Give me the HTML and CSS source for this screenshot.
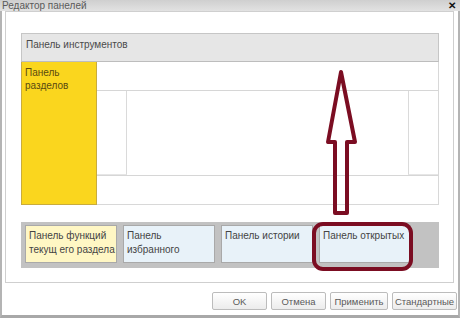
FILE: index.html
```html
<!DOCTYPE html>
<html lang="ru">
<head>
<meta charset="UTF-8" />
<title>Редактор панелей</title>
<link rel="stylesheet" href="styles.css">
</head>
<body>

<div class="window">
  <div class="titlebar">
    <span class="title">Редактор панелей</span>
    <span class="close">✕</span>
  </div>

  <div class="editor">
    <div class="panel toolbar">Панель инструментов</div>

    <div class="middle">
      <div class="panel sections">Панель<br>разделов</div>
      <div class="work">
        <div class="strip"></div>
        <div class="work-row">
          <div class="side"></div>
          <div class="center"></div>
          <div class="side right"></div>
        </div>
        <div class="strip bottom"></div>
      </div>
    </div>

    <div class="bottom-bar">
      <div class="item yellow">Панель функций<br>текущ его раздела</div>
      <div class="item">Панель<br>избранного</div>
      <div class="item">Панель истории</div>
      <div class="item">Панель открытых</div>
    </div>
  </div>

  <div class="buttons">
    <button class="btn ok">OK</button>
    <button class="btn cancel">Отмена</button>
    <button class="btn apply">Применить</button>
    <button class="btn std">Стандартные</button>
  </div>

  <!-- red marks drawn over the dialog -->
  <svg class="marks" width="460" height="318" viewBox="0 0 460 318">
    <path d="M341 72 L328 142 L335 142 L335 213 L347 213 L347 142 L355 142 Z"
          fill="none" stroke="#7b0d22" stroke-width="4" stroke-linejoin="round" />
    <rect x="314" y="224" width="97" height="45" rx="9" ry="9"
          fill="none" stroke="#7b0d22" stroke-width="4" />
  </svg>
</div>

</body>
</html>
```

FILE: styles.css
```css
body {
  margin: 0;
  font-family: "Liberation Sans", Arial, sans-serif;
  background: #fff;
}
.window {
  position: relative;
  width: 460px;
  height: 318px;
  box-sizing: border-box;
  background: #fff;
  border-left: 2px solid #b4b4b4;
  border-right: 2px solid #b4b4b4;
  border-bottom: 3px solid #a8a8a8;
  display: flex;
  flex-direction: column;
}
.titlebar {
  height: 11px;
  margin: 0 -2px;
  padding: 0 4px 0 2px;
  background: linear-gradient(to bottom, #cfcfcf, #e2e2e2);
  display: flex;
  align-items: center;
  justify-content: space-between;
}
.title {
  font-size: 10px;
  color: #5a5a5a;
  line-height: 10px;
}
.close {
  font-size: 10px;
  font-weight: bold;
  color: #111;
  line-height: 10px;
}
.editor {
  margin: 0 4px 0 3px;
  height: 272px;
  box-sizing: border-box;
  border: 1px solid #cfcfcf;
  padding: 21px 14px 0 15px;
  display: flex;
  flex-direction: column;
}
.panel {
  font-size: 10px;
  color: #4a4a4a;
  box-sizing: border-box;
}
.toolbar {
  height: 29px;
  background: #e6e6e6;
  border: 1px solid #c6c6c6;
  border-bottom-color: #bdbdbd;
  padding: 5px 4px;
}
.middle {
  height: 143px;
  display: flex;
}
.sections {
  width: 76px;
  background: #fad61e;
  border: 1px solid #c9ac3c;
  border-top: none;
  padding: 4px 3px;
  line-height: 13px;
  color: #5a4a10;
}
.work {
  flex: 1;
  display: flex;
  flex-direction: column;
  border-right: 1px solid #d8d8d8;
  border-bottom: 1px solid #d8d8d8;
}
.strip {
  height: 29px;
  border-bottom: 1px solid #d6d6d6;
  box-sizing: border-box;
}
.strip.bottom {
  height: 28px;
  border-bottom: none;
}
.work-row {
  flex: 1;
  display: flex;
  border-bottom: 1px solid #d6d6d6;
}
.side {
  width: 29px;
  border-right: 1px solid #dadada;
  border-bottom: 1px solid #e6e6e6;
}
.side.right {
  border-right: none;
  border-left: 1px solid #dadada;
}
.center {
  flex: 1;
}
.bottom-bar {
  margin-top: 17px;
  height: 46px;
  box-sizing: border-box;
  background: #c2c2c2;
  padding: 3px 4px 5px 4px;
  display: flex;
  gap: 6px;
}
.item {
  width: 92px;
  box-sizing: border-box;
  background: #e8f2f9;
  border: 1px solid #a9a9a9;
  padding: 3px 3px;
  font-size: 10px;
  line-height: 14px;
  color: #444;
  white-space: nowrap;
}
.item.yellow {
  background: #fff7c4;
}
.buttons {
  display: flex;
  justify-content: flex-end;
  gap: 4px;
  padding: 9px 1px 0 0;
}
.btn {
  height: 18px;
  padding: 0;
  font-family: "Liberation Sans", Arial, sans-serif;
  font-size: 9.5px;
  color: #5a5a5a;
  background: linear-gradient(to bottom, #ffffff, #ececec);
  border: 1px solid #bcbcbc;
  border-radius: 2px;
}
.ok { width: 55px; }
.cancel { width: 55px; }
.apply { width: 58px; }
.std { width: 65px; }
.marks {
  position: absolute;
  top: 0;
  left: -2px;
  pointer-events: none;
}
```
